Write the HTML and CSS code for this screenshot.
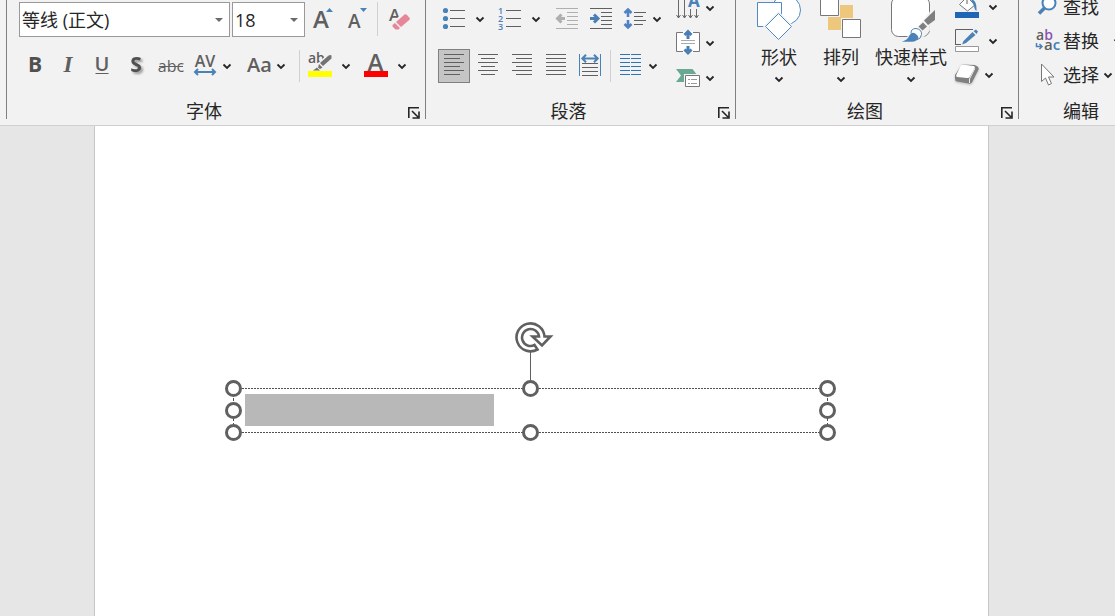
FILE: index.html
```html
<!DOCTYPE html>
<html lang="zh-CN">
<head>
<meta charset="utf-8">
<title>演示文稿</title>
<link rel="stylesheet" href="styles.css">
</head>
<body>
<svg class="defs" aria-hidden="true">
  <symbol id="chev" viewBox="0 0 10 10"><path d="M1.500 3.500 5 7 8.500 3.500" fill="none" stroke="#262626" stroke-width="1.800"/></symbol>
  <symbol id="launch" viewBox="0 0 12 12"><path d="M.8 11V.8H11M4 4l6 6M11 4.500V11H4.500" fill="none" stroke="#262626" stroke-width="1.600"/></symbol>
</svg>
<header class="ribbon">
  <section class="group font-group">
    <div class="rows">
      <div class="row top">
        <label class="combo family"><select aria-label="字体"><option>等线 (正文)</option></select><svg viewBox="0 0 8 4"><path d="M0 0h8L4 4z"/></svg></label>
        <label class="combo size"><select aria-label="字号"><option>18</option></select><svg viewBox="0 0 8 4"><path d="M0 0h8L4 4z"/></svg></label>
        <button class="tool" aria-label="增大字号"><svg class="icon" viewBox="0 0 24 24"><text class="glyph semi" x="3" y="21" font-size="24">A</text><path class="bf" d="M16 5 19.500 1 23 5z"/></svg></button>
        <button class="tool" aria-label="减小字号"><svg class="icon" viewBox="0 0 24 24"><text class="glyph semi" x="4" y="21" font-size="19">A</text><path class="bf" d="M16 1h7l-3.500 4z"/></svg></button>
        <span class="sep"></span>
        <button class="tool" aria-label="清除格式"><svg class="icon" viewBox="0 0 24 24"><text class="glyph semi" x="2" y="13.500" font-size="17">A</text><path d="M18 5 24 12 11 24 2 17z" fill="#f2f2f2"/><path d="M17.500 7.500q1-.7 2 0l3 3.200q.7 1 0 2L14 20 9 15zM8 16l5 5-1.500 1.500H8.500L5.500 19.500V18z" fill="#e68699"/></svg></button>
      </div>
      <div class="row">
        <button class="tool narrow" aria-label="加粗"><svg class="icon" viewBox="0 0 24 24"><text class="glyph bold mid" x="12" y="18" font-size="21">B</text></svg></button>
        <button class="tool" aria-label="倾斜"><svg class="icon" viewBox="0 0 24 24"><text class="glyph serif mid" x="12" y="18" font-size="23">I</text></svg></button>
        <button class="tool" aria-label="下划线"><svg class="icon" viewBox="0 0 24 24"><text class="glyph semi mid" x="12" y="16.500" font-size="20">U</text><path class="g" d="M5.500 19.500h13"/></svg></button>
        <button class="tool" aria-label="阴影"><svg class="icon shadow" viewBox="0 0 24 24"><text class="glyph bold mid" x="12" y="18" font-size="21">S</text></svg></button>
        <button class="tool wide" aria-label="删除线"><svg class="icon" viewBox="0 0 24 24"><text class="glyph mid" x="12" y="17.500" font-size="16">abc</text><path class="g" d="M0 12.500h24"/></svg></button>
        <button class="split" aria-label="字符间距"><svg class="icon" viewBox="0 0 24 24"><text class="glyph semi mid" x="12" y="13" font-size="16">AV</text><path class="b2" d="M2 18h20M5 15l-3 3 3 3M19 15l3 3-3 3"/></svg><svg class="chev"><use href="#chev"/></svg></button>
        <button class="split after-gap" aria-label="更改大小写"><svg class="icon" viewBox="0 0 24 24"><text class="glyph semi" x="0" y="17.500" font-size="20">Aa</text></svg><svg class="chev"><use href="#chev"/></svg></button>
        <span class="sep loose"></span>
        <button class="split roomy" aria-label="突出显示颜色"><svg class="icon" viewBox="0 0 24 24"><text class="glyph semi" x="0" y="9" font-size="14">ab</text><path d="M22.500 1.500 12 11.500" stroke="#f2f2f2" stroke-width="6"/><path d="M20 2q2-1.500 3.500-.5v3L15 12l-3-3zM11 10l3.500 3.500L12 15l-2-1.500zM9 13.500l3 3H5z" fill="#737373"/><path d="M0 17h24v6H0z" fill="#ff0"/></svg><svg class="chev"><use href="#chev"/></svg></button>
        <button class="split roomy last" aria-label="字体颜色"><svg class="icon" viewBox="0 0 24 24"><text class="glyph semi mid" x="11.500" y="17" font-size="24">A</text><path d="M0 17h24v6H0z" fill="red"/></svg><svg class="chev"><use href="#chev"/></svg></button>
      </div>
    </div>
    <footer><span>字体</span><button class="launcher" aria-label="字体设置"><svg><use href="#launch"/></svg></button></footer>
  </section>

  <section class="group para-group">
    <div class="rows">
      <div class="row top">
        <button class="split roomy" aria-label="项目符号"><svg class="icon" viewBox="0 0 24 24"><g class="bf"><circle cx="3.500" cy="3.500" r="2.600"/><circle cx="3.500" cy="11.500" r="2.600"/><circle cx="3.500" cy="19.500" r="2.600"/></g><path class="g" d="M8 3.500h15M8 11.500h15M8 19.500h15"/></svg><svg class="chev"><use href="#chev"/></svg></button>
        <button class="split roomy last" aria-label="编号"><svg class="icon" viewBox="0 0 24 24"><g class="num semi" font-size="9"><text x="0" y="7">1</text><text x="0" y="15">2</text><text x="0" y="23">3</text></g><path class="g" d="M8 3.500h15M8 11.500h15M8 19.500h15"/></svg><svg class="chev"><use href="#chev"/></svg></button>
        <button class="tool narrow outdent" aria-label="减少缩进" disabled><svg class="icon" viewBox="0 0 24 24"><path d="M1 1.500h22M12 5.500h11M12 9.500h11M12 13.500h11M12 17.500h11M1 21.500h22" stroke="#b0aeb0"/><path d="M10 11.500H3M6.500 7.500l-4 4 4 4" fill="none" stroke="#b0aeb0" stroke-width="3"/></svg></button>
        <button class="tool narrow inset" aria-label="增加缩进"><svg class="icon" viewBox="0 0 24 24"><path class="g" d="M1 1.500h22M12 5.500h11M12 9.500h11M12 13.500h11M12 17.500h11M1 21.500h22"/><path class="b3" d="M1 11.500h8M5 7.500l4 4-4 4"/></svg></button>
        <button class="split inset" aria-label="行距"><svg class="icon" viewBox="0 0 24 24"><path d="M5 2.500V10M1.500 6 5 2.500 8.500 6M5 13v7.500M1.500 17 5 20.500 8.500 17" fill="none" stroke="#4f81c4" stroke-width="2.600"/><path class="g" d="M11 5.500h12M11 9.500h9M11 13.500h12M11 17.500h9"/></svg><svg class="chev"><use href="#chev"/></svg></button>
      </div>
      <div class="row">
        <button class="tool narrow selected" aria-label="左对齐" aria-pressed="true"><svg class="icon" viewBox="0 0 24 24"><path class="g" d="M2 .5h20M2 4.500h16M2 8.500h20M2 12.500h16M2 16.500h20M2 20.500h16"/></svg></button>
        <button class="tool narrow inset" aria-label="居中"><svg class="icon" viewBox="0 0 24 24"><path class="g" d="M2 .5h20M5 4.500h14M2 8.500h20M5 12.500h14M2 16.500h20M5 20.500h14"/></svg></button>
        <button class="tool narrow inset" aria-label="右对齐"><svg class="icon" viewBox="0 0 24 24"><path class="g" d="M2 .5h20M6 4.500h16M2 8.500h20M6 12.500h16M2 16.500h20M6 20.500h16"/></svg></button>
        <button class="tool narrow inset" aria-label="两端对齐"><svg class="icon" viewBox="0 0 24 24"><path class="g" d="M2 .5h20M2 4.500h20M2 8.500h20M2 12.500h20M2 16.500h20M2 20.500h20"/></svg></button>
        <button class="tool narrow inset" aria-label="分散对齐"><svg class="icon" viewBox="0 0 24 24"><path d="M1.500 0v22M22.500 0v22" stroke="#4a82b8"/><path class="b2" d="M4 4.500h16M8 .8 4.300 4.500 8 8.200M16 .8l3.700 3.700L16 8.200"/><path class="g" d="M4 9.500h16M4 13.500h16M4 17.500h16M4 21.500h16"/></svg></button>
        <span class="sep"></span>
        <button class="split" aria-label="分栏"><svg class="icon" viewBox="0 0 24 24"><path d="M1 .5h10M1 4.500h10M1 8.500h10M1 12.500h10M1 16.500h10M1 20.500h10M12 .5h10M12 4.500h10M12 8.500h10M12 12.500h10M12 16.500h10M12 20.500h10" stroke="#2f75b5"/></svg><svg class="chev"><use href="#chev"/></svg></button>
      </div>
    </div>
    <div class="stack para-stack">
      <button class="split" aria-label="文字方向"><svg class="icon" viewBox="0 0 24 24"><path d="M2.500 0v22M8.500 0v22M14.500 13v9M20.500 13v9M.5 19l2 3 2-3M6.500 19l2 3 2-3M12.500 19l2 3 2-3M18.500 19l2 3 2-3" fill="none" stroke="#6a6a6a"/><text class="num bold" x="12" y="11" font-size="17">A</text></svg><svg class="chev"><use href="#chev"/></svg></button>
      <button class="split" aria-label="对齐文本"><svg class="icon" viewBox="0 0 24 24"><path class="w" d="M.5 1.500h23v19H.5z"/><path d="M5 9.500h14M5 12.500h14" stroke="#aaa"/><path d="M7 0h10v4H7zM7 18h10v4H7z" fill="#fff"/><path class="b3" d="M12 8V1M8.500 4 12 .5 15.500 4M12 15v6M8.500 18.500 12 22l3.500-3.500"/></svg><svg class="chev"><use href="#chev"/></svg></button>
      <button class="split" aria-label="转换为 SmartArt"><svg class="icon" viewBox="0 0 24 24"><path d="M0 3h16.500l5 6.500-5 6.500H0l5-6.500z" fill="#6aa893"/><path d="M8 8h16v14H8z" fill="#f2f2f2"/><path class="w" d="M9.500 9.500h14v11h-14z"/><path d="M12 13.500h2M12 17.500h2M15 13.500h6M15 17.500h6" stroke="#999"/></svg><svg class="chev"><use href="#chev"/></svg></button>
    </div>
    <footer><span>段落</span><button class="launcher" aria-label="段落设置"><svg><use href="#launch"/></svg></button></footer>
  </section>

  <section class="group draw-group">
    <button class="big"><svg class="art" viewBox="0 0 48 42"><circle class="wb" cx="31" cy="10" r="14.500"/><path class="wb" d="M2.500 2.500h24v24h-24z"/><path d="M23.500 11 39 26.500 23.500 42 8 26.500z" fill="#f2f2f2"/><path class="wb" d="M23.500 13.500l13 13-13 13-13-13z"/></svg><span>形状</span><svg class="chev"><use href="#chev"/></svg></button>
    <button class="big"><svg class="art" viewBox="0 0 48 42"><path d="M23 5h13v13H23zM11 17h13v13H11z" fill="#edc77c"/><path d="M3 0h20v17H3zM24 18h20v20H24z" fill="#f2f2f2"/><path class="w" d="M3.500-3h18v18.500h-18zM25.500 19.500h18v18h-18z"/></svg><span>排列</span><svg class="chev"><use href="#chev"/></svg></button>
    <button class="big quick"><svg class="art" viewBox="0 0 48 42"><rect class="w" x="4.500" y="-3" width="38" height="39.500" rx="7"/><path d="M48 5v20L34 40l-20 2L30 28z" fill="#f2f2f2" opacity=".9"/><path d="M48 10v10l-7 5-4-4.500zM36 22.500l4 4-4.500 4-4-4z" fill="#7f7f7f"/><path d="M24 33q0-4.500 5-4.500 6 1 5.500 6-.5 4.500-5 5.500" fill="#fff" stroke="#4a82b8"/><path d="M15 41.800q6-2 7.500-6.500 2-3.500 5.500-2l2.500 2.200 1 2q-1.500 4-6.500 4.300z" fill="#4a82b8"/></svg><span>快速样式</span><svg class="chev"><use href="#chev"/></svg></button>
    <div class="stack">
      <button class="split roomy" aria-label="形状填充"><svg class="icon" viewBox="0 0 24 24"><path class="w" d="M4.500 9.500 12 2l8 8-7.500 6z"/><path d="M16 4.500q6 0 5.500 11.500-2-1-2.500-5z" fill="#4a82b8"/><path class="g" d="M12 9V4"/><path d="M0 17h24v6H0z" fill="#1f67b5"/></svg><svg class="chev"><use href="#chev"/></svg></button>
      <button class="split roomy" aria-label="形状轮廓"><svg class="icon" viewBox="0 0 24 24"><path class="g" d="M.5 16V.5H18M.5 15.500H6"/><path d="M18.500 2 21 .5l2 2L21.500 5zM17.500 3l3 3L11 14l-4 1.500L8.500 12z" fill="#4a82b8"/><path d="M.5 17.500h23v5H.5z" fill="#fff" stroke="#999"/></svg><svg class="chev"><use href="#chev"/></svg></button>
      <button class="split" aria-label="形状效果"><svg class="icon soft" viewBox="0 0 24 24"><path d="M7 1.500 19.500 2q4 1 4.300 4L17 19.500q-1 1.500-3.500 1L2 18.500Q0 18 0 15.500V12z" fill="#808080"/><path d="M7.500 1.500 18.500 3q2 .5 1 2.500L15 13.500q-.8 1.700-3 1.500L2.500 14q-2-.5-1-2.500l4-8.500q.8-1.500 2-1.500z" fill="#fff"/><path d="M19.800 5.500 14.500 16v4" fill="none" stroke="#eee"/></svg><svg class="chev"><use href="#chev"/></svg></button>
    </div>
    <footer><span>绘图</span><button class="launcher" aria-label="绘图设置"><svg><use href="#launch"/></svg></button></footer>
  </section>

  <section class="group edit-group">
    <div class="stack">
      <button class="split named"><svg class="icon" viewBox="0 0 24 24"><circle cx="14" cy="8" r="6.500" fill="#fff" stroke="#4a82b8" stroke-width="2"/><path d="M9.500 13 4 18.500" stroke="#4a82b8" stroke-width="3.500"/></svg><span>查找</span></button>
      <button class="split named"><svg class="icon" viewBox="0 0 24 24"><text class="glyph semi" x="1" y="11" font-size="14">a<tspan fill="#8c55b0">b</tspan></text><text class="glyph semi" x="9" y="21" font-size="15">a<tspan fill="#3d7ebd">c</tspan></text><path d="M1.500 14v3.500H7M4.500 15l2.500 2.500L4.500 20" fill="none" stroke="#4a82b8" stroke-width="1.500"/></svg><span>替换</span><svg class="chev far"><use href="#chev"/></svg></button>
      <button class="split named"><svg class="icon" viewBox="0 0 24 24"><path d="M6.500 1v17.500l4-3.500 3 7 3-1.500-3-6.500h5.500z" fill="#fff" stroke="#777"/></svg><span>选择</span><svg class="chev"><use href="#chev"/></svg></button>
    </div>
    <footer><span>编辑</span></footer>
  </section>
</header>
<main class="workspace">
  <div class="sheet">
    <div class="textbox" role="textbox" aria-label="文本框">
      <div class="selection"></div>
      <svg class="rotate" viewBox="0 0 40 60"><path d="M16.500 32v28" stroke="#606060"/><path d="M23.500 29.500A14 14 0 1 1 30.500 16.500H36.500L28 25.500 18.500 16.500H25A8.500 8.500 0 1 0 20.500 25z" fill="#fff" stroke="#606060" stroke-width="2.600"/></svg>
      <i class="edge h t"></i><i class="edge h b"></i><i class="edge v l"></i><i class="edge v r"></i>
      <i class="knob l t"></i><i class="knob c t"></i><i class="knob r t"></i>
      <i class="knob l m"></i><i class="knob r m"></i>
      <i class="knob l b"></i><i class="knob c b"></i><i class="knob r b"></i>
    </div>
  </div>
</main>
</body>
</html>
```
FILE: styles.css
```css
* { box-sizing: border-box; }
body {
  margin: 0;
  min-height: 100vh;
  display: flex;
  flex-direction: column;
  overflow: hidden;
  background: #e6e6e6;
  color: #262626;
  font: 18px/24px "Open Sans", "Noto Sans CJK SC", sans-serif;
}
.defs { display: none; }
svg { display: block; flex: none; }
button {
  margin: 0;
  padding: 0;
  border: 0;
  background: none;
  color: inherit;
  font: inherit;
}

/* Ribbon */
.ribbon {
  display: flex;
  padding: 0 0 6px 6px;
  overflow: hidden;
  background: #f2f2f2;
  border-bottom: 1px solid #d0d0d0;
}
.group {
  display: flex;
  flex-wrap: wrap;
  align-content: flex-start;
  flex: none;
  height: 119px;
  padding-left: 12px;
  border-left: 1px solid #808080;
}
.font-group { width: 419px; }
.para-group { width: 310px; }
.draw-group { width: 283px; }
.edit-group { width: 149px; }
.group > :not(footer) { height: 99px; }
.group footer {
  display: flex;
  flex: 0 0 100%;
  align-items: flex-end;
  height: 20px;
}
footer span { flex: 1; margin-left: -12px; line-height: 16px; text-align: center; }
.launcher { width: 24px; padding-left: 7px; }
.edit-group footer { padding-right: 24px; }
.launcher svg { width: 12px; height: 12px; }

.rows { display: flex; flex-direction: column; gap: 12px; padding-top: 1px; }
.row { display: flex; height: 34px; align-items: stretch; }
.row.top { height: 36px; }
.tool { display: grid; place-items: center; width: 34px; }
.tool.narrow { width: 32px; }
.tool.wide { width: 36px; }
.split { display: flex; align-items: center; gap: 5px; padding: 0 4px; }
.roomy { gap: 9px; }
.last { margin-left: 5px; }
.after-gap { margin-left: 7px; }
.inset { margin-left: 2px; }
.outdent { margin-left: 6px; }
.selected { background: #c5c5c5; border: 1px solid #808080; }
.sep { width: 1px; margin: 1px 4px; background: #d0d0d0; }
.sep.loose { margin-left: 9px; }
.icon { width: 24px; height: 24px; overflow: visible; }
.chev { width: 10px; height: 10px; }
.shadow { filter: drop-shadow(2px 2px 1px #999); }
.soft { filter: drop-shadow(0 1px 1px #bbb); }

.combo {
  position: relative;
  height: 35px;
  margin-right: 2px;
  align-self: flex-end;
}
.family { width: 211px; }
.combo.size { width: 73px; margin-right: 0; }
.combo select {
  width: 100%;
  height: 100%;
  padding: 0 2px;
  appearance: none;
  border: 1px solid #999;
  border-radius: 0;
  background: #fff;
  color: #262626;
  font: inherit;
}
.combo svg {
  position: absolute;
  right: 7px;
  top: 16px;
  width: 8px;
  height: 4px;
  fill: #6a6a6a;
  pointer-events: none;
}

.stack { display: flex; flex-direction: column; align-items: flex-start; margin: -10px 0 10px; }
.stack .split { flex: none; height: 34px; }
.para-stack { gap: 1px; margin: -9px 0 9px 6px; }
.big { display: flex; flex-direction: column; align-items: center; width: 62px; }
.big span { margin: 3px 0 5px; white-space: nowrap; }
.quick { width: 78px; }
.draw-group .stack { margin-left: 1px; }
.art { width: 48px; height: 42px; }
.named { gap: 4px; }
.far { margin-left: 10px; }

/* Icon paint */
.glyph { fill: #5f5f5f; font-family: "Open Sans", sans-serif; }
.semi { font-weight: 600; }
.bold { font-weight: 700; }
.glyph.bold { fill: #505050; }
.mid { text-anchor: middle; }
.serif { font-family: "Liberation Serif", serif; font-style: italic; font-weight: 700; }
.num { fill: #4a82b8; font-family: "Open Sans", sans-serif; }
.g { fill: none; stroke: #606060; }
.bf { fill: #4a82b8; }
.b2 { fill: none; stroke: #4a82b8; stroke-width: 2; }
.b3 { fill: none; stroke: #4a7fb5; stroke-width: 3; }
.w { fill: #fff; stroke: #777; }
.wb { fill: #fff; stroke: #5089c6; }

/* Slide */
.workspace { flex: 1; display: flex; padding: 0 126px 0 94px; }
.sheet {
  position: relative;
  flex: 1;
  background: #fff;
  border: 1px solid #c6c6c6;
  border-width: 0 1px;
}
.textbox {
  position: absolute;
  left: 138px;
  top: 262px;
  width: 595px;
  height: 45px;
  padding: 6px 12px;
}
.selection { width: 249px; height: 32px; background: #b8b8b8; }
.rotate { position: absolute; left: 281px; top: -68px; width: 40px; height: 60px; }
.edge, .knob { position: absolute; }
.edge.h { left: 0; right: 0; height: 1px; background: repeating-linear-gradient(90deg, #505050 0 2px, #fff 2px 3px); }
.edge.v { top: 0; bottom: 0; width: 1px; background: repeating-linear-gradient(#505050 0 3px, #fff 3px 5px); }
.edge.t { top: 0; }
.edge.b { bottom: 0; }
.edge.l { left: 0; }
.edge.r { right: 0; }
.knob {
  width: 17px;
  height: 17px;
  border: 3px solid #606060;
  border-radius: 50%;
  background: #fff;
}
.knob.l { left: -8px; }
.knob.c { left: 289px; }
.knob.r { right: -8px; }
.knob.t { top: -8px; }
.knob.m { top: 14px; }
.knob.b { bottom: -8px; }
```
